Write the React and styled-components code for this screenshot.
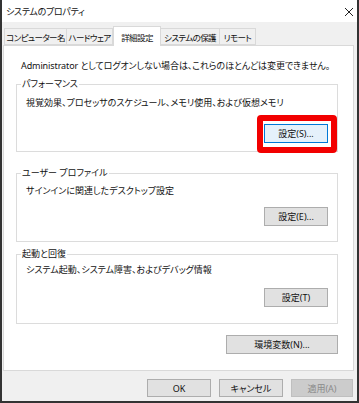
import styled, { createGlobalStyle } from "styled-components";

const GlobalStyle = createGlobalStyle`
  html, body { margin: 0; padding: 0; background: #ffffff; }
  * { box-sizing: border-box; }
  body {
    font-family: "Noto Sans", "Noto Sans CJK JP", sans-serif;
    font-size: 9px;
    font-feature-settings: "palt";
    color: #111;
  }
`;

const Window = styled.div`
  width: 359px;
  height: 403px;
  display: flex;
  flex-direction: column;
  border: 2px solid #333;
  border-top: none;
  background: #f0f0f0;
`;

const TitleBar = styled.div`
  height: 22px;
  display: flex;
  align-items: center;
  justify-content: space-between;
  padding: 1px 3px 0 4px;
  background: #ffffff;
  font-size: 9px;
  letter-spacing: -0.3px;
`;

const Body = styled.div`
  flex: 1;
  display: flex;
  flex-direction: column;
  padding: 4px 3px 0 1px;
`;

const Tabs = styled.div`
  display: flex;
  align-items: flex-end;
  height: 19px;
  padding-left: 1px;
`;

const Tab = styled.div`
  width: ${(p) => p.w}px;
  height: ${(p) => (p.active ? 20 : 17)}px;
  margin-bottom: ${(p) => (p.active ? -1 : 0)}px;
  display: flex;
  align-items: center;
  justify-content: center;
  background: ${(p) => (p.active ? "#ffffff" : "#f0f0f0")};
  border: 1px solid #d9d9d9;
  border-bottom: ${(p) => (p.active ? "none" : "1px solid #d9d9d9")};
  border-left: ${(p) => (p.first || p.active ? "1px solid #d9d9d9" : "none")};
  position: relative;
  z-index: ${(p) => (p.active ? 1 : 0)};
  white-space: nowrap;
  font-size: 8.5px;
  letter-spacing: -0.6px;
`;

const Panel = styled.div`
  flex: 1;
  display: flex;
  flex-direction: column;
  background: #ffffff;
  border: 1px solid #d9d9d9;
  padding: 14px 15px 0 12px;
`;

const Note = styled.div`
  line-height: 12px;
  margin-left: 5px;
  white-space: nowrap;
  letter-spacing: -0.1px;
`;

const Group = styled.fieldset`
  margin: ${(p) => p.mt}px 0 0 0;
  border: 1px solid #dcdcdc;
  padding: ${(p) => p.pt}px 9px ${(p) => p.pb}px 9px;
  display: flex;
  flex-direction: column;
  min-width: 0;
`;

const Legend = styled.legend`
  line-height: 12px;
  padding: 0 1px;
  margin-left: -5px;
`;

const Desc = styled.div`
  line-height: 12px;
  white-space: nowrap;
`;

const ButtonSlot = styled.div`
  align-self: flex-end;
  margin-top: ${(p) => p.mt}px;
  position: relative;
`;

const Highlight = styled.span`
  position: absolute;
  top: -9px;
  bottom: -10px;
  left: -7px;
  right: -9px;
  border: 6px solid #f20000;
  border-radius: 4px;
  pointer-events: none;
`;

const Button = styled.button`
  width: ${(p) => p.w || 64}px;
  height: ${(p) => p.h || 19}px;
  padding: 0;
  font: inherit;
  font-size: 9px;
  display: flex;
  align-items: center;
  justify-content: center;
  color: ${(p) => (p.disabled ? "#8a8a8a" : "#111")};
  background: ${(p) => (p.focused ? "#e5f1fb" : p.disabled ? "#cccccc" : "#e1e1e1")};
  border: 1px solid ${(p) => (p.focused ? "#0078d7" : p.disabled ? "#bfbfbf" : "#adadad")};
`;

const EnvRow = styled.div`
  display: flex;
  justify-content: flex-end;
  margin-top: 11px;
`;

const Footer = styled.div`
  height: 30px;
  display: flex;
  justify-content: flex-end;
  gap: 8px;
  padding: 8px 1px 0 0;
`;

const CloseIcon = () => (
  <svg width="10" height="10" viewBox="0 0 10 10">
    <path d="M1 1 L9 9 M9 1 L1 9" stroke="#222" strokeWidth="1" />
  </svg>
);

const tabs = [
  { label: "コンピューター名", w: 63 },
  { label: "ハードウェア", w: 46 },
  { label: "詳細設定", w: 48, active: true },
  { label: "システムの保護", w: 59 },
  { label: "リモート", w: 36 },
];

const App = () => {
  return (
    <>
      <GlobalStyle />
      <Window>
        <TitleBar>
          <span>システムのプロパティ</span>
          <CloseIcon />
        </TitleBar>
        <Body>
          <Tabs>
            {tabs.map((t, i) => (
              <Tab key={t.label} w={t.w} active={t.active} first={i === 0}>
                {t.label}
              </Tab>
            ))}
          </Tabs>
          <Panel>
            <Note>Administrator としてログオンしない場合は、これらのほとんどは変更できません。</Note>
            <Group mt={6} pt={7} pb={8}>
              <Legend>パフォーマンス</Legend>
              <Desc>視覚効果、プロセッサのスケジュール、メモリ使用、および仮想メモリ</Desc>
              <ButtonSlot mt={15}>
                <Button focused>設定(S)...</Button>
                <Highlight />
              </ButtonSlot>
            </Group>
            <Group mt={15} pt={6} pb={15}>
              <Legend>ユーザー プロファイル</Legend>
              <Desc>サインインに関連したデスクトップ設定</Desc>
              <ButtonSlot mt={10}>
                <Button>設定(E)...</Button>
              </ButtonSlot>
            </Group>
            <Group mt={6} pt={4} pb={16}>
              <Legend>起動と回復</Legend>
              <Desc>システム起動、システム障害、およびデバッグ情報</Desc>
              <ButtonSlot mt={12}>
                <Button>設定(T)</Button>
              </ButtonSlot>
            </Group>
            <EnvRow>
              <Button w={112}>環境変数(N)...</Button>
            </EnvRow>
          </Panel>
          <Footer>
            <Button h={18}>OK</Button>
            <Button h={18}>キャンセル</Button>
            <Button h={18} w={62} disabled>適用(A)</Button>
          </Footer>
        </Body>
      </Window>
    </>
  );
};

export default App;
